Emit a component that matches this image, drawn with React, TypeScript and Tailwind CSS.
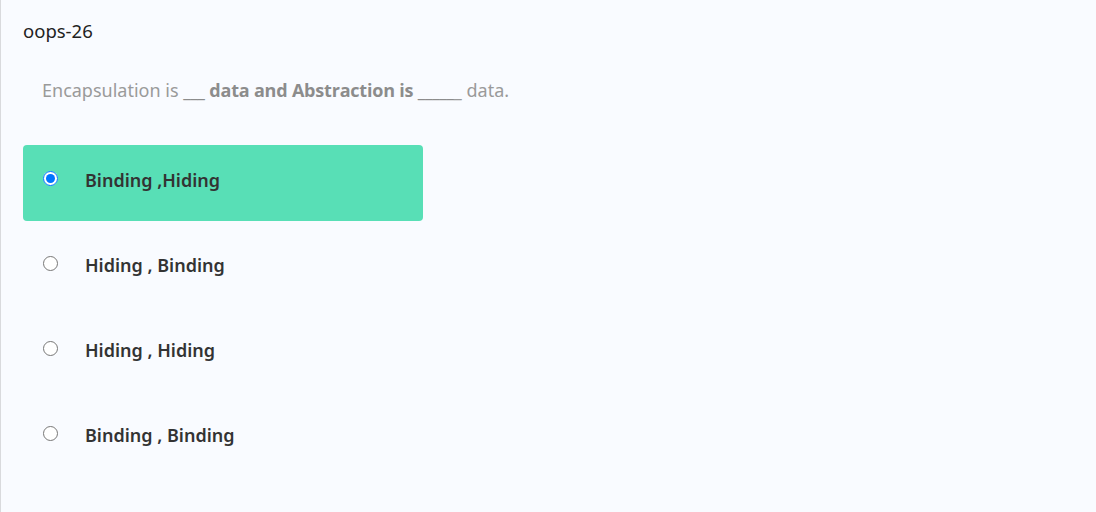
import React from "react";

const options = ["Binding ,Hiding", "Hiding , Binding", "Hiding , Hiding", "Binding , Binding"];

export default function App() {
  return (
    <div className="min-h-[512px] w-full bg-[#f9fbff] border-l border-[#d9dadd] pl-[22px] pt-[18px]" style={{ fontFamily: '"Noto Sans", sans-serif' }}>
      <div className="text-[18.5px] leading-[26px] text-[#222]">oops-26</div>
      <div className="mt-[34px] pl-[19px] text-[18px] leading-[24px] text-[#9a9a9a]">
        Encapsulation is{" "}
        <span className="font-bold text-[#8c8c8c]" style={{ fontFamily: '"Open Sans", sans-serif', letterSpacing: "-0.2px" }}>___ data and Abstraction is _____</span>
        _ data.
      </div>
      <div className="mt-[43px] flex flex-col gap-[9px] w-[400px]">
        {options.map((o, i) => (
          <label key={i} className={`flex items-center h-[76px] rounded-[4px] pb-[6px] ${i === 0 ? "bg-[#58dfb6]" : ""}`}>
            <input type="radio" name="q" defaultChecked={i === 0} className="ml-[20px] w-[15px] h-[15px] mt-[-4px]" />
            <span className="ml-[27px] text-[18px] font-semibold text-[#333]">{o}</span>
          </label>
        ))}
      </div>
    </div>
  );
}
